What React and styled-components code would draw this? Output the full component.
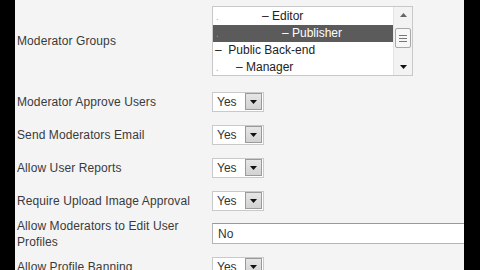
import React from "react";
import styled, { createGlobalStyle } from "styled-components";

const GlobalStyle = createGlobalStyle`
  html, body {
    margin: 0;
    padding: 0;
    background: #000;
  }
  body {
    font-family: "Liberation Sans", Arial, sans-serif;
  }
`;

const Frame = styled.div`
  width: 480px;
  height: 270px;
  display: flex;
  overflow: hidden;
  background: #000;
`;

const Pillar = styled.div`
  width: ${(p) => p.w}px;
  flex-shrink: 0;
  background: #000;
`;

const Screen = styled.div`
  flex: 1;
  background: #f4f4f4;
  padding: 6px 0 0 2px;
  overflow: hidden;
  color: #3a3a3a;
  font-size: 12px;
`;

const Row = styled.div`
  display: grid;
  grid-template-columns: 195px 1fr;
  align-items: center;
  height: ${(p) => p.h || 33}px;
  margin-bottom: ${(p) => p.mb || 0}px;
`;

const Label = styled.div`
  line-height: 16px;
  letter-spacing: 0.1px;
`;

const ListBox = styled.div`
  width: 199px;
  height: 68px;
  border: 1px solid #c8c8c8;
  background: #fff;
  display: flex;
  overflow: hidden;
`;

const Items = styled.div`
  flex: 1;
  padding-top: 1px;
`;

const Item = styled.div`
  height: 17px;
  line-height: 17px;
  display: flex;
  align-items: center;
  white-space: pre;
  color: ${(p) => (p.selected ? "#fff" : "#222")};
  background: ${(p) => (p.selected ? "#5b5b5b" : "transparent")};
`;

const Dot = styled.span`
  width: ${(p) => p.indent}px;
  padding-left: ${(p) => (p.indent > 0 ? 3 : 2)}px;
  color: ${(p) => (p.selected ? "#999" : "#aaa")};
  font-size: 10px;
  flex-shrink: 0;
`;

const ScrollBar = styled.div`
  width: 18px;
  background: #f3f3f3;
  border-left: 1px solid #e4e4e4;
  display: flex;
  flex-direction: column;
  align-items: center;
  justify-content: space-between;
  padding: 6px 0 6px;
`;

const Thumb = styled.div`
  width: 14px;
  height: 18px;
  border: 1px solid #a8a8a8;
  border-radius: 2px;
  background: #f7f7f7;
  display: flex;
  flex-direction: column;
  justify-content: center;
  align-items: center;
  gap: 2px;
  margin-top: -6px;
`;

const Grip = styled.div`
  width: 8px;
  height: 1px;
  background: #777;
`;

const Select = styled.div`
  width: 46px;
  height: 18px;
  border: 1px solid #c9c9c9;
  background: #fff;
  display: flex;
  align-items: center;
  padding-left: 4px;
`;

const SelectText = styled.span`
  flex: 1;
  color: #333;
`;

const ArrowButton = styled.div`
  width: 15px;
  height: 15px;
  border: 1px solid #9a9a9a;
  background: linear-gradient(#e6e6e6, #d2d2d2);
  display: flex;
  align-items: center;
  justify-content: center;
  margin-right: 1px;
`;

const TextBox = styled.div`
  height: 19px;
  border: 1px solid #b5b5b5;
  border-top-color: #999;
  background: #fff;
  display: flex;
  align-items: center;
  padding-left: 5px;
  margin-right: -4px;
  color: #333;
`;

const Arrow = ({ up }) => (
  <svg width="7" height="4" viewBox="0 0 7 4">
    <path d={up ? "M0 4 L3.5 0 L7 4 Z" : "M0 0 L7 0 L3.5 4 Z"} fill={up ? "#666" : "#111"} />
  </svg>
);

const YesSelect = () => (
  <Select>
    <SelectText>Yes</SelectText>
    <ArrowButton>
      <Arrow />
    </ArrowButton>
  </Select>
);

const groups = [
  { indent: 46, text: "– Editor" },
  { indent: 66, text: "– Publisher", selected: true },
  { indent: 0, text: "–  Public Back-end" },
  { indent: 20, text: "– Manager" },
];

const yesRows = [
  "Moderator Approve Users",
  "Send Moderators Email",
  "Allow User Reports",
  "Require Upload Image Approval",
];

export default function App() {
  return (
    <>
      <GlobalStyle />
      <Frame>
        <Pillar w={15} />
        <Screen>
          <Row h={70} mb={9}>
            <Label>Moderator Groups</Label>
            <ListBox>
              <Items>
                {groups.map((g) => (
                  <Item key={g.text} selected={g.selected}>
                    <Dot indent={g.indent} selected={g.selected}>
                      {g.indent > 0 ? "." : ""}
                    </Dot>
                    {g.text}
                  </Item>
                ))}
              </Items>
              <ScrollBar>
                <Arrow up />
                <Thumb>
                  <Grip />
                  <Grip />
                  <Grip />
                </Thumb>
                <Arrow />
              </ScrollBar>
            </ListBox>
          </Row>
          {yesRows.map((label) => (
            <Row key={label}>
              <Label>{label}</Label>
              <YesSelect />
            </Row>
          ))}
          <Row>
            <Label>
              Allow Moderators to Edit User
              <br />
              Profiles
            </Label>
            <TextBox>No</TextBox>
          </Row>
          <Row>
            <Label>Allow Profile Banning</Label>
            <YesSelect />
          </Row>
        </Screen>
        <Pillar w={16} />
      </Frame>
    </>
  );
}
